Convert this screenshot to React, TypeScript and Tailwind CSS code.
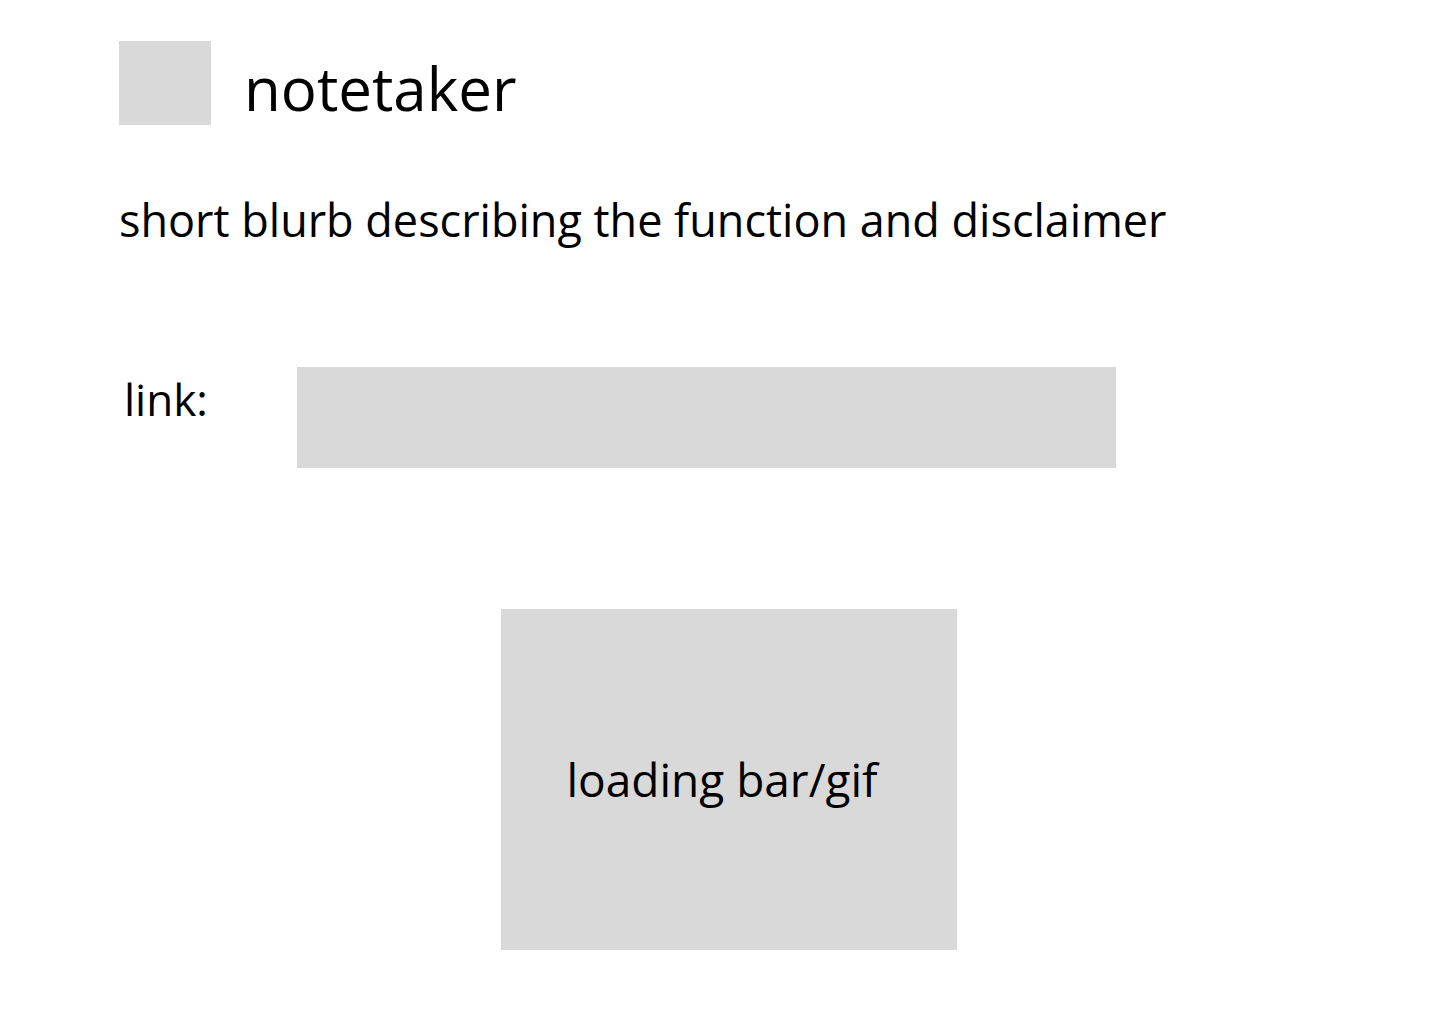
import React from 'react';

export default function App() {
    return (
        <div className="min-h-screen w-full bg-white text-black font-['Open_Sans',sans-serif]">
            <div className="pl-[119px] pt-[41px]">
                {/* Header */}
                <div className="flex items-start gap-[33px]">
                    <div className="w-[92px] h-[84px] bg-[#d9d9d9]" />
                    <h1 className="mt-[17px] text-[60px] leading-none font-normal">notetaker</h1>
                </div>

                {/* Blurb */}
                <p className="mt-[72px] text-[45px] leading-none">
                    short blurb describing the function and disclaimer
                </p>

                {/* Link input */}
                <div className="mt-[125px] flex items-start">
                    <label className="w-[178px] pl-[5px] mt-[10px] text-[44px] leading-none">link:</label>
                    <input
                        type="text"
                        className="w-[819px] h-[101px] bg-[#d9d9d9] outline-none border-0 px-4 text-[28px]"
                    />
                </div>

                {/* Loading */}
                <div className="mt-[141px] ml-[382px] w-[456px] h-[341px] bg-[#d9d9d9] flex items-center justify-center pr-[14px]">
                    <span className="text-[46px] leading-none pb-[2px]">loading bar/gif</span>
                </div>
            </div>
        </div>
    );
}
